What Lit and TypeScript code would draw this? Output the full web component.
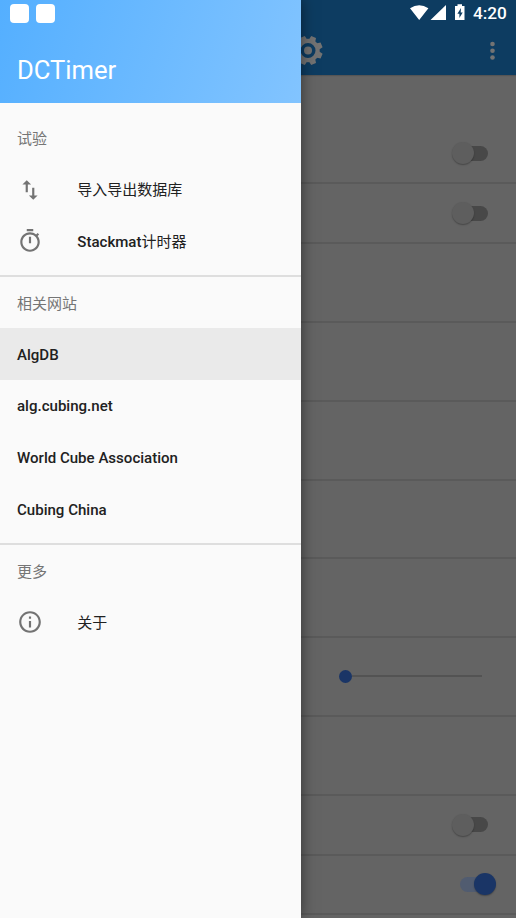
import { LitElement, html, css, svg } from "lit";
import { customElement, property } from "lit/decorators.js";

const icons = {
  swap: svg`<path d="M9 3L5 6.99h3V14h2V6.99h3L9 3zm7 14.01V10h-2v7.01h-3L15 21l4-3.99h-3z"/>`,
  timer: svg`<path d="M15 1H9v2h6V1zm-4 13h2V8h-2v6zm8.03-6.61l1.42-1.42c-.43-.51-.9-.99-1.41-1.41l-1.42 1.42C16.07 4.74 14.12 4 12 4c-4.97 0-9 4.03-9 9s4.02 9 9 9 9-4.03 9-9c0-2.12-.74-4.07-1.97-5.61zM12 20c-3.87 0-7-3.13-7-7s3.13-7 7-7 7 3.13 7 7-3.13 7-7 7z"/>`,
  info: svg`<path d="M11 17h2v-6h-2v6zm1-15C6.48 2 2 6.48 2 12s4.48 10 10 10 10-4.48 10-10S17.52 2 12 2zm0 18c-4.41 0-8-3.59-8-8s3.59-8 8-8 8 3.59 8 8-3.59 8-8 8zM11 9h2V7h-2v2z"/>`,
};

@customElement("settings-switch")
class SettingsSwitch extends LitElement {
  @property({ type: Boolean, reflect: true }) on = false;
  static styles = css`
    :host { display: block; position: relative; width: 44px; height: 24px; }
    .track { position: absolute; left: 8px; top: 4.5px; width: 28px; height: 15px; border-radius: 8px; background: #484848; }
    .thumb { position: absolute; left: 0; top: 1px; width: 22px; height: 22px; border-radius: 50%; background: #5e5e5e; box-shadow: 0 1px 1.5px rgba(0,0,0,.3); }
    :host([on]) .track { background: #515c70; }
    :host([on]) .thumb { left: 22px; background: #1a3566; }
  `;
  render() { return html`<div class="track"></div><div class="thumb"></div>`; }
}

@customElement("app-root")
class AppRoot extends LitElement {
  static styles = css`
    :host { display: block; position: relative; width: 516px; height: 918px; overflow: hidden; background: #646464; font-family: Roboto, "Noto Sans CJK SC", sans-serif; }
    svg { display: block; }
    .bar { box-sizing: border-box; height: 75px; background: #0d3c61; box-shadow: 0 1px 1px rgba(0,0,0,.15); display: flex; justify-content: flex-end; position: relative; }
    .gear { position: absolute; left: 293px; top: 35px; }
    .dots { margin: 41px 21px 0 0; width: 5px; height: 19px; }
    .row { box-sizing: border-box; border-bottom: 2px solid #5a5a5a; display: flex; align-items: center; justify-content: flex-end; padding-right: 20px; }
    .first { height: 109.4px; align-items: flex-end; padding-bottom: 17.2px; }
    .short { height: 59.3px; }
    .tall { height: 78.95px; }
    .slider { width: 143.5px; height: 14px; margin: 0 14px 1px 0; display: flex; align-items: center; }
    .knob { width: 13px; height: 13px; border-radius: 50%; background: #1a3566; }
    .line { flex: 1; height: 2px; background: #535353; }
    .drawer { position: absolute; left: 0; top: 0; width: 301px; height: 918px; background: #fafafa; box-shadow: 0 0 14px rgba(0,0,0,.5); }
    .head { box-sizing: border-box; height: 103px; padding: 55px 17px 0; background: linear-gradient(108deg, #54afff, #82c4ff); color: #fff; font-size: 25.6px; line-height: 31px; margin-bottom: 9px; }
    .sub, .item { box-sizing: border-box; height: 51.7px; padding: 0 17px; display: flex; align-items: center; font-size: 15.05px; }
    .sub { color: #757575; padding-bottom: .4px; font-size: 15px; }
    .item { color: #212121; font-weight: 500; }
    .item svg { fill: #737373; margin-right: 34.3px; }
    .cjk { font-weight: 400; font-size: 15px; }
    .raised { margin-bottom: 1.2px; }
    .plain { margin-top: 1px; }
    .active { background: #eaeaea; }
    .rule { height: 2px; background: #dedede; margin-top: 8.2px; margin-bottom: -.6px; }
    .status { position: absolute; inset: 0 0 auto 0; height: 26px; display: flex; align-items: center; color: #fff; }
    .note { width: 19px; height: 19px; border-radius: 4px; background: #fff; margin-right: 7px; }
    .note:first-child { margin-left: 10px; }
    .sys { margin-left: auto; }
    .clock { width: 35px; margin: 0 8px 1px 7px; font-size: 17.2px; font-weight: 500; line-height: 26px; }
  `;

  item(label: unknown, icon?: unknown, active = false) {
    return html`<div class="item ${active ? "active" : ""}">
      ${icon ? html`<svg width="26" height="26" viewBox="0 0 24 24">${icon}</svg>` : ""}<span class=${icon ? "raised" : "plain"}>${label}</span></div>`;
  }

  render() {
    const teeth = Array.from({ length: 8 }, (_, i) => i * 45);
    return html`
      <div class="bar">
        <svg class="gear" width="30" height="31" viewBox="-15 -15.5 30 31">
          <circle r="9.6" fill="none" stroke="#737373" stroke-width="4.2"/>
          ${teeth.map((a) => svg`<path transform="rotate(${a + 22.5})" d="M-3.5-10L-2.6-14.7H2.6L3.5-10z" fill="#737373"/>`)}
          <circle r="4" fill="#737373"/>
        </svg>
        <svg class="dots" viewBox="0 0 5 19" fill="#737373"><circle cx="2.5" cy="3" r="2.3"/><circle cx="2.5" cy="9.8" r="2.3"/><circle cx="2.5" cy="16.5" r="2.3"/></svg>
      </div>
      <div class="row first"><settings-switch></settings-switch></div>
      <div class="row short"><settings-switch></settings-switch></div>
      <div class="row tall"></div><div class="row tall"></div><div class="row tall"></div><div class="row tall"></div><div class="row tall"></div>
      <div class="row tall"><div class="slider"><div class="knob"></div><div class="line"></div></div></div>
      <div class="row tall"></div>
      <div class="row short"><settings-switch></settings-switch></div>
      <div class="row short"><settings-switch on></settings-switch></div>
      <div class="drawer">
        <div class="head">DCTimer</div>
        <div class="sub">试验</div>
        ${this.item(html`<span class="cjk">导入导出数据库</span>`, icons.swap)}
        ${this.item(html`Stackmat<span class="cjk">计时器</span>`, icons.timer)}
        <div class="rule"></div>
        <div class="sub">相关网站</div>
        ${this.item("AlgDB", undefined, true)}
        ${this.item("alg.cubing.net")}
        ${this.item("World Cube Association")}
        ${this.item("Cubing China")}
        <div class="rule"></div>
        <div class="sub">更多</div>
        ${this.item(html`<span class="cjk">关于</span>`, icons.info)}
      </div>
      <div class="status">
        <div class="note"></div><div class="note"></div>
        <svg class="sys" width="56" height="26" viewBox="0 0 56 26" fill="#fff">
          <path d="M0 8.3Q9.2 2 18.4 8.3L9.2 20zM20.5 20L36 5v15z"/>
          <path fill-rule="evenodd" d="M45 6h2.5V4.3h4.5V6h2.5v14H45zM51 8l-3.6 5.7h2V18l3.3-5.6h-2z"/>
        </svg>
        <div class="clock">4:20</div>
      </div>`;
  }
}
